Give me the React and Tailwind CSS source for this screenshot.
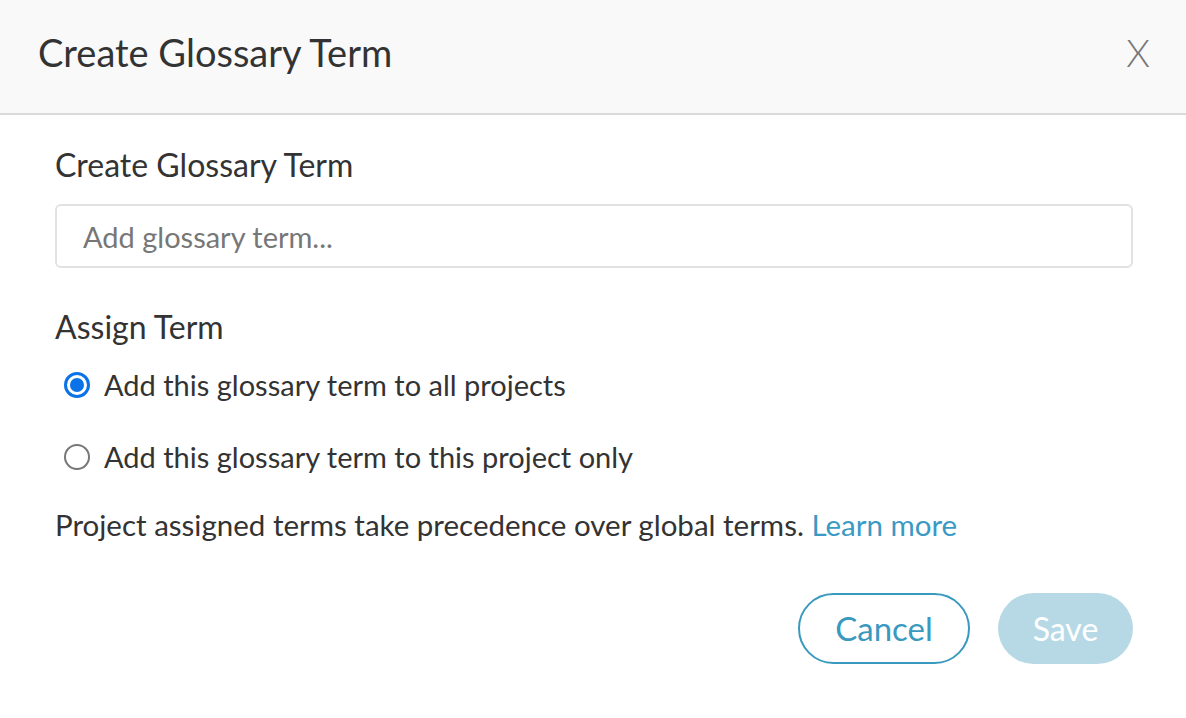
export default function App() {
  const font = { fontFamily: "Lato, 'Open Sans', sans-serif" };
  return (
    <div className="min-h-screen w-full bg-white text-[#333]" style={font}>
      <div className="flex h-[115px] items-center justify-between border-b-2 border-[#dadada] bg-[#f9f9f9] pb-[9px] pl-[38px] pr-[36px]">
        <h1 className="text-[38px] leading-[46px] font-normal text-[#333]">Create Glossary Term</h1>
        <button className="text-[38px] leading-[46px] font-light text-[#777]">X</button>
      </div>

      <div className="pl-[55px] pr-[53px] pt-[30px]">
        <label className="block text-[32px] leading-[40px] text-[#333]">Create Glossary Term</label>
        <input
          type="text"
          placeholder="Add glossary term..."
          className="mt-[19px] h-[64px] w-full rounded-[6px] border-2 border-[#e2e2e2] px-[26px] text-[29px] text-[#333] outline-none placeholder:text-[#777]"
        />

        <div className="mt-[39px] text-[32px] leading-[40px] text-[#333]">Assign Term</div>

        <div className="mt-[18px] flex flex-col gap-[32px]">
          <label className="flex h-[40px] items-center gap-[14px] pl-[9px] text-[29px]">
            <span className="flex h-[26px] w-[26px] shrink-0 items-center justify-center rounded-full border-[3px] border-[#0b72e7] bg-white">
              <span className="h-[14px] w-[14px] rounded-full bg-[#0b72e7]" />
            </span>
            Add this glossary term to all projects
          </label>
          <label className="flex h-[40px] items-center gap-[14px] pl-[9px] text-[29px]">
            <span className="h-[26px] w-[26px] shrink-0 rounded-full border-2 border-[#777] bg-white" />
            Add this glossary term to this project only
          </label>
        </div>

        <p className="mt-[28px] text-[29.5px] leading-[40px] text-[#333]">
          Project assigned terms take precedence over global terms.{" "}
          <a className="text-[#3a9ac4]">Learn more</a>
        </p>

        <div className="mt-[48px] flex justify-end gap-[28px]">
          <button className="h-[71px] w-[172px] rounded-full border-2 border-[#3a99bf] text-[33px] text-[#3a99bf]">
            Cancel
          </button>
          <button className="h-[71px] w-[135px] rounded-full bg-[#b7d9e6] text-[32px] text-white">
            Save
          </button>
        </div>
      </div>
    </div>
  );
}
